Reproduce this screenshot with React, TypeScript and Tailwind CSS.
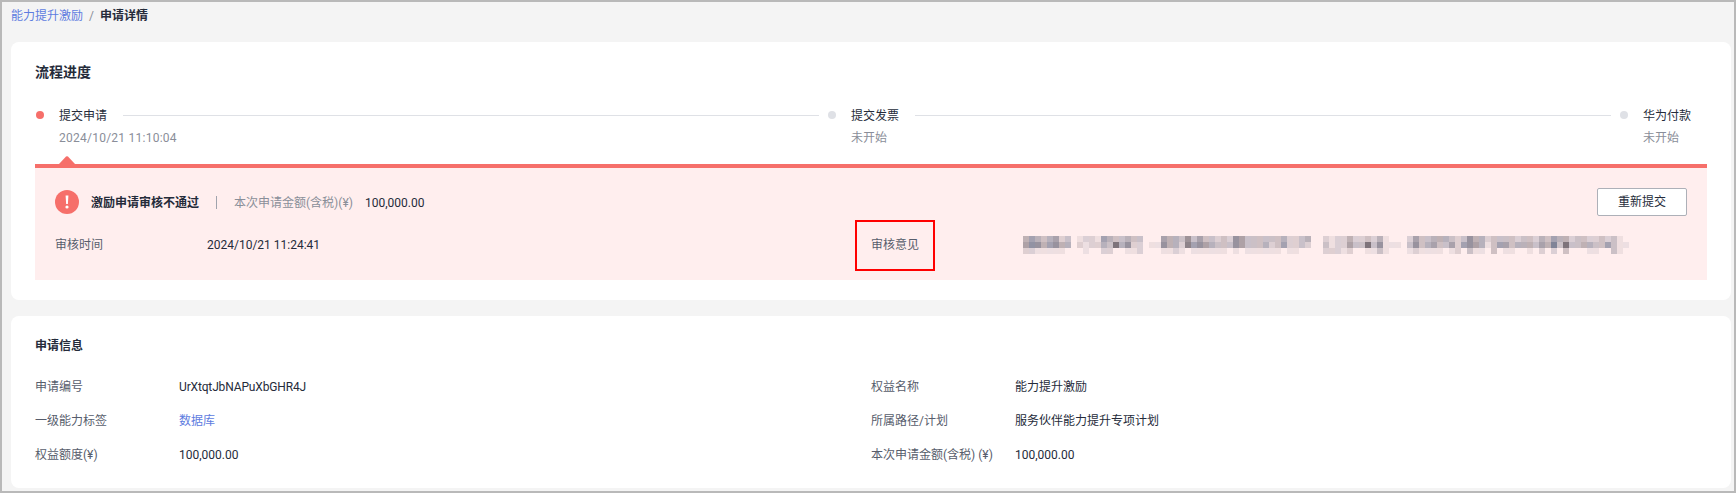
import React from 'react';

const FONT = "font-['Roboto','Noto_Sans_CJK_SC',sans-serif]";

// mosaic over the hidden review comment, one digit per 6px block (0 = background, 9 = darkest)
const MOSAIC = [
  '45434523 12215433433 00' + '5443635332326533333342234' + '  21224223241' + '00 ' + '2533444323644' + '23333233243' + '5442332232310',
  '56645644 21224384622 11' + '6442756543336533342352232' + '  31225338361' + '11 ' + '3634533525654' + '13553444354' + '7383344335311',
  '22111110 01002200112 00' + '1121011111101011111101100' + '  22212001131' + '00 ' + '1211110120311' + '03011001020' + '2030001100310',
];

const mix = (d: number, k: number) => {
  const t = d / 9;
  const tint = k % 3 === 0 ? 10 : k % 3 === 1 ? -8 : 0;
  const r = Math.round(255 + (100 + tint - 255) * t);
  const g = Math.round(238 + (100 - 238) * t);
  const b = Math.round(238 + (118 - tint - 238) * t);
  return `rgb(${r},${g},${b})`;
};

const Mosaic = () => (
  <svg width="606" height="18" viewBox="0 0 606 18" className="block" shapeRendering="crispEdges">
    {MOSAIC.map((row, y) =>
      row.split('').map((c, k) =>
        c === ' ' || c === '0' ? null : (
          <rect key={`${y}-${k}`} x={k * 6} y={y * 6} width="6" height="6" fill={mix(Number(c), k)} />
        ),
      ),
    )}
  </svg>
);

type StepProps = {
  title: string;
  sub: string;
  active?: boolean;
  last?: boolean;
  subClass?: string;
};

const Step = ({ title, sub, active, last, subClass }: StepProps) => (
  <div className={last ? 'w-[88px]' : 'flex-1 pr-2'}>
    <div className="flex h-5 items-center">
      <span className={`ml-px h-2 w-2 shrink-0 rounded-full ${active ? 'bg-[#f66f6a]' : 'bg-[#dfe1e6]'}`}></span>
      <span className="ml-[15px] shrink-0 pt-0.5 text-[#252b3a]">{title}</span>
      {!last && <span className="ml-4 h-px flex-1 bg-[#dfe1e6]"></span>}
    </div>
    <div className={`mt-[3px] ml-6 h-5 leading-5 text-[#8a8e99] ${subClass ?? ''}`}>{sub}</div>
  </div>
);

const InfoRow = ({ label, value, link, valueClass }: { label: string; value: string; link?: boolean; valueClass?: string }) => (
  <div className="flex h-[34px] items-center">
    <span className="w-[144px] shrink-0 text-[#575d6c]">{label}</span>
    <span className={`${link ? 'text-[#5e7ce0]' : 'text-[#252b3a]'} ${valueClass ?? ''}`}>{value}</span>
  </div>
);

export default function App() {
  return (
    <div className={`${FONT} h-[493px] w-[1736px] overflow-hidden border-2 border-[#b9b9b9] bg-[#f4f4f4] pr-[3px] pl-[9px] text-xs leading-5`}>
      <div className="flex h-7 items-center">
        <span className="text-[#5e7ce0]">能力提升激励</span>
        <span className="mx-[6px] text-[#8a8e99]">/</span>
        <span className="font-bold text-[#252b3a]">申请详情</span>
      </div>

      <section className="mt-3 h-[258px] rounded-lg bg-white px-6 pt-5">
        <h2 className="text-sm leading-5 font-bold text-[#252b3a]">流程进度</h2>
        <div className="mt-[23px] flex">
          <Step title="提交申请" sub="2024/10/21 11:10:04" active subClass="tracking-[0.25px]" />
          <Step title="提交发票" sub="未开始" />
          <Step title="华为付款" sub="未开始" last />
        </div>
        <svg width="16" height="8" viewBox="0 0 16 8" className="mt-2 ml-6 block">
          <path d="M0 8 L7 0.6 Q8 -0.2 9 0.6 L16 8 Z" fill="#f66f6a" />
        </svg>
        <div className="relative border-t-4 border-[#f66f6a] bg-[#ffeeee] px-5 pt-5 pb-[25px]">
          <div className="flex h-7 items-center">
            <svg width="24" height="24" viewBox="0 0 24 24" className="shrink-0">
              <circle cx="12" cy="12" r="12" fill="#f66f6a" />
              <path d="M10.6 5.5h2.8l-.5 8.5h-1.8z" fill="#fff" />
              <circle cx="12" cy="17" r="1.6" fill="#fff" />
            </svg>
            <span className="ml-3 pt-0.5 font-bold text-[#252b3a]">激励申请审核不通过</span>
            <span className="ml-[17px] h-[13px] w-px bg-[#a0a3ad]"></span>
            <span className="ml-[17px] pt-0.5 text-[#8a8e99]">本次申请金额(含税)(¥)</span>
            <span className="ml-3 pt-0.5 text-[#252b3a]">100,000.00</span>
            <button type="button" className="ml-auto h-7 w-[90px] rounded-[2px] border border-[#adb0b8] bg-white text-xs text-[#252b3a]">
              重新提交
            </button>
          </div>
          <div className="mt-[19px] flex h-5 items-center">
            <span className="w-[152px] shrink-0 text-[#575d6c]">审核时间</span>
            <span className="w-[664px] shrink-0 text-[#252b3a]">2024/10/21 11:24:41</span>
            <span className="w-[152px] shrink-0 text-[#575d6c]">审核意见</span>
            <Mosaic />
          </div>
          {/* annotation box drawn on top of the screenshot */}
          <div className="absolute top-[52px] left-[820px] h-[51px] w-[80px] border-2 border-[#ff0000]"></div>
        </div>
      </section>

      <section className="mt-4 h-[172px] rounded-lg bg-white px-6 pt-5">
        <h2 className="leading-5 font-bold text-[#252b3a]">申请信息</h2>
        <div className="mt-[14px] grid grid-cols-2">
          <InfoRow label="申请编号" value="UrXtqtJbNAPuXbGHR4J" valueClass="tracking-[-0.15px]" />
          <InfoRow label="权益名称" value="能力提升激励" />
          <InfoRow label="一级能力标签" value="数据库" link />
          <InfoRow label="所属路径/计划" value="服务伙伴能力提升专项计划" />
          <InfoRow label="权益额度(¥)" value="100,000.00" />
          <InfoRow label="本次申请金额(含税) (¥)" value="100,000.00" />
        </div>
      </section>
    </div>
  );
}
